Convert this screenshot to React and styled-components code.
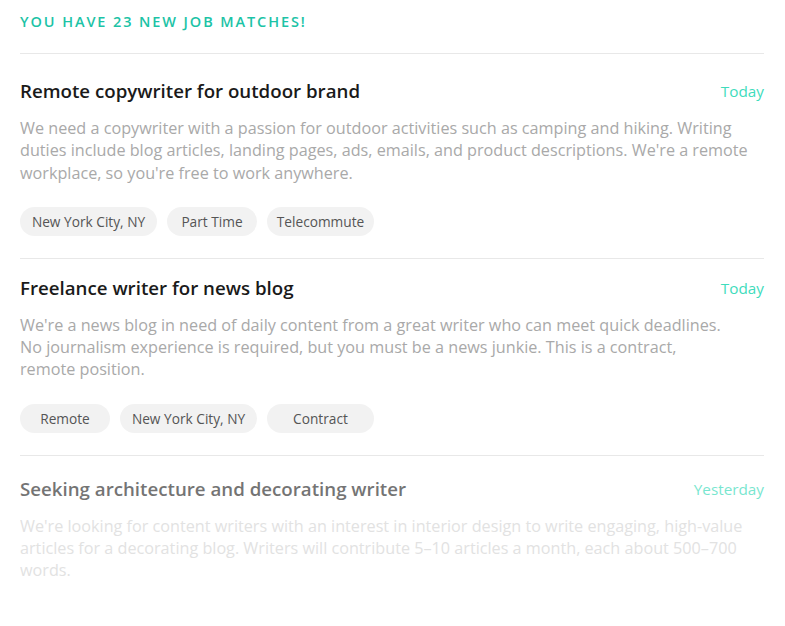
import styled, { createGlobalStyle } from 'styled-components'

const GlobalStyle = createGlobalStyle`
    body {
        margin: 0;
        background: #fff;
        font-family: "Open Sans", "Noto Sans", sans-serif;
    }
`

const Page = styled.div`
    padding: 12px 21px 0 20px;
`
const Heading = styled.h2`
    margin: 0 0 21px;
    font-size: 14.5px;
    line-height: 20px;
    font-weight: 600;
    letter-spacing: 1.9px;
    text-transform: uppercase;
    color: #1cc3a6;
`
const List = styled.ul`
    margin: 0;
    padding: 0;
    list-style: none;
    border-top: 1px solid #e8e8e8;
`
const Job = styled.li`
    padding: ${props => props.top}px 0 22px;
    border-bottom: ${props => props.last ? 'none' : '1px solid #e8e8e8'};
    opacity: ${props => props.faded ? 0.7 : 1};
`
const Head = styled.div`
    display: flex;
    align-items: center;
    justify-content: space-between;
`
const Title = styled.h3`
    margin: 0;
    font-size: 18.7px;
    line-height: 24px;
    font-weight: 600;
    color: ${props => props.faded ? '#3a3a3a' : '#1a1a1a'};
`
const When = styled.span`
    font-size: 15.3px;
    color: #3fdcbc;
`
const Desc = styled.p`
    margin: 14px 0 0;
    font-size: 16.2px;
    line-height: 22.3px;
    white-space: pre-line;
    color: ${props => props.faded ? '#d6d6d6' : '#a9a9a9'};
`
const Tags = styled.div`
    display: flex;
    gap: 10px;
    margin-top: 23px;
`
const Tag = styled.span`
    display: inline-flex;
    align-items: center;
    justify-content: center;
    height: 29px;
    width: ${props => props.w}px;
    box-sizing: border-box;
    border-radius: 15px;
    background: #f2f2f2;
    font-size: 13.7px;
    color: #555;
`

const jobs = [
    {
        title: 'Remote copywriter for outdoor brand',
        when: 'Today',
        top: 25,
        desc: "We need a copywriter with a passion for outdoor activities such as camping and hiking. Writing duties include blog articles, landing pages, ads, emails, and product descriptions. We're a remote workplace, so you're free to work anywhere.",
        tags: [['New York City, NY', 137], ['Part Time', 90], ['Telecommute', 107]],
    },
    {
        title: 'Freelance writer for news blog',
        when: 'Today',
        top: 17,
        desc: "We're a news blog in need of daily content from a great writer who can meet quick deadlines.\nNo journalism experience is required, but you must be a news junkie. This is a contract,\nremote position.",
        tags: [['Remote', 90], ['New York City, NY', 137], ['Contract', 107]],
    },
    {
        title: 'Seeking architecture and decorating writer',
        when: 'Yesterday',
        top: 21,
        desc: "We're looking for content writers with an interest in interior design to write engaging, high-value articles for a decorating blog. Writers will contribute 5–10 articles a month, each about 500–700 words.",
        tags: [],
        faded: true,
    },
]

export default function App() {
    return (
        <>
            <GlobalStyle />
            <Page>
                <Heading>You have 23 new job matches!</Heading>
                <List>
                    {jobs.map((job, i) => (
                        <Job key={i} top={job.top} faded={job.faded} last={i === jobs.length - 1}>
                            <Head>
                                <Title faded={job.faded}>{job.title}</Title>
                                <When>{job.when}</When>
                            </Head>
                            <Desc faded={job.faded}>{job.desc}</Desc>
                            {job.tags.length > 0 && (
                                <Tags>
                                    {job.tags.map(([label, w]) => <Tag key={label} w={w}>{label}</Tag>)}
                                </Tags>
                            )}
                        </Job>
                    ))}
                </List>
            </Page>
        </>
    )
}
